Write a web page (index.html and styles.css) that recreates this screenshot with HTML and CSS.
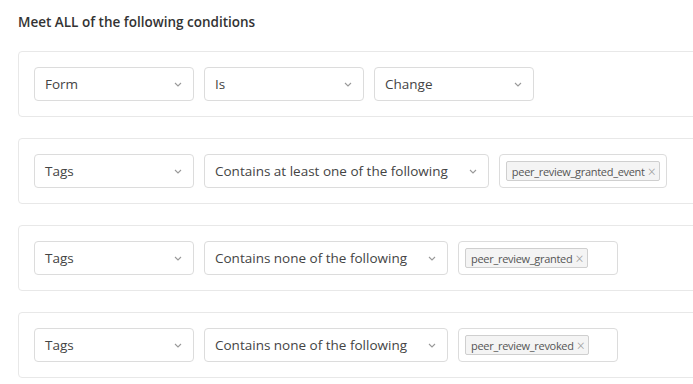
FILE: index.html
```html
<!DOCTYPE html>
<html lang="en">
<head>
    <meta charset="UTF-8">
    <title>Conditions</title>
    <link rel="stylesheet" href="styles.css">
</head>
<body>
    <div class="rules-page">
        <h3 class="rules-title">Meet ALL of the following conditions</h3>

        <!-- 条件列表 -->
        <div class="rule-list">
            <div class="rule-card">
                <div class="select"><span>Form</span><svg class="chevron" viewBox="0 0 8 5"><path d="M1 1l3 3 3-3"/></svg></div>
                <div class="select"><span>Is</span><svg class="chevron" viewBox="0 0 8 5"><path d="M1 1l3 3 3-3"/></svg></div>
                <div class="select"><span>Change</span><svg class="chevron" viewBox="0 0 8 5"><path d="M1 1l3 3 3-3"/></svg></div>
            </div>

            <div class="rule-card">
                <div class="select"><span>Tags</span><svg class="chevron" viewBox="0 0 8 5"><path d="M1 1l3 3 3-3"/></svg></div>
                <div class="select wide"><span>Contains at least one of the following</span><svg class="chevron" viewBox="0 0 8 5"><path d="M1 1l3 3 3-3"/></svg></div>
                <div class="tag-box"><span class="tag">peer_review_granted_event<span class="tag-x">×</span></span></div>
            </div>

            <div class="rule-card">
                <div class="select"><span>Tags</span><svg class="chevron" viewBox="0 0 8 5"><path d="M1 1l3 3 3-3"/></svg></div>
                <div class="select wide"><span>Contains none of the following</span><svg class="chevron" viewBox="0 0 8 5"><path d="M1 1l3 3 3-3"/></svg></div>
                <div class="tag-box"><span class="tag">peer_review_granted<span class="tag-x">×</span></span></div>
            </div>

            <div class="rule-card">
                <div class="select"><span>Tags</span><svg class="chevron" viewBox="0 0 8 5"><path d="M1 1l3 3 3-3"/></svg></div>
                <div class="select wide"><span>Contains none of the following</span><svg class="chevron" viewBox="0 0 8 5"><path d="M1 1l3 3 3-3"/></svg></div>
                <div class="tag-box"><span class="tag">peer_review_revoked<span class="tag-x">×</span></span></div>
            </div>
        </div>
    </div>
</body>
</html>
```

FILE: styles.css
```css
/* 基础样式 */
* {
    margin: 0;
    padding: 0;
    box-sizing: border-box;
}

html, body {
    background-color: #fff;
    color: #444;
    font-family: "Open Sans", "Noto Sans", sans-serif;
    overflow: hidden;
}

.rules-page {
    padding: 12px 0 0 18px;
    width: 720px;
}

/* 标题 */
.rules-title {
    font-size: 13.5px;
    font-weight: 600;
    line-height: 20px;
    color: #333;
    margin-bottom: 19px;
}

.rule-list {
    display: flex;
    flex-direction: column;
    gap: 21px;
}

/* 条件卡片 */
.rule-card {
    display: flex;
    align-items: center;
    gap: 10px;
    padding: 15px;
    border: 1px solid #e8e8e8;
    border-radius: 4px;
}

/* 下拉框 */
.select {
    display: flex;
    align-items: center;
    justify-content: space-between;
    min-width: 160px;
    height: 34px;
    padding: 0 11px 0 10px;
    border: 1px solid #dcdcdc;
    border-radius: 4px;
    font-size: 13.5px;
    color: #444;
}

.select.wide span {
    margin-right: 21px;
}

.chevron {
    width: 8px;
    height: 5px;
    fill: none;
    stroke: #999;
    stroke-width: 1.1;
}

/* 标签输入框 */
.tag-box {
    display: flex;
    align-items: center;
    min-width: 160px;
    height: 34px;
    padding: 0 6px;
    border: 1px solid #dcdcdc;
    border-radius: 4px;
}

.tag {
    display: inline-flex;
    align-items: center;
    height: 20px;
    padding: 0 4px 0 5px;
    background: #f4f4f4;
    border: 1px solid #cfcfcf;
    border-radius: 2px;
    font-size: 11px;
    color: #555;
    letter-spacing: -0.3px;
}

.tag-x {
    margin-left: 3px;
    padding-top: 2px;
    color: #999;
    font-size: 14px;
    font-weight: 300;
    line-height: 1;
}
```
